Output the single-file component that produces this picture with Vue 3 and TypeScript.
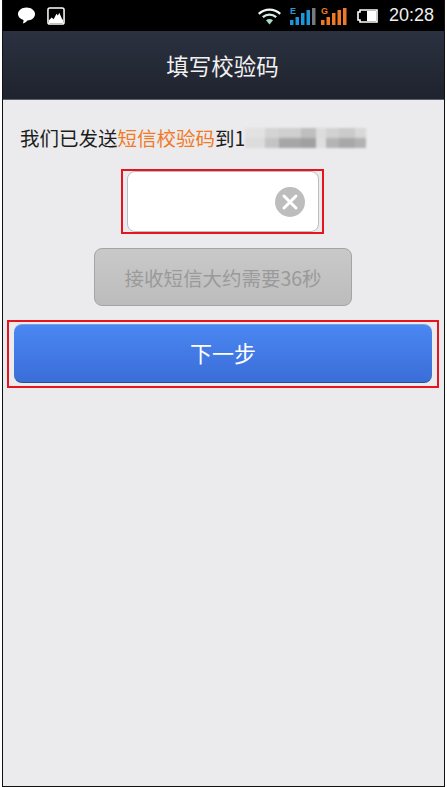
<script setup lang="ts">
const title = '填写校验码'
const seconds = 36

// greys of the mosaic that hides the phone number, top band then bottom band
const blurCells = [
  { w: 20, top: '#e2e2e3', bottom: '#dcdcdd' },
  { w: 14, top: '#d4d4d5', bottom: '#c4c4c5' },
  { w: 22, top: '#cfcfd0', bottom: '#a6a6a7' },
  { w: 15, top: '#bfbfc0', bottom: '#a0a0a1' },
  { w: 10, top: '#dcdcdd', bottom: '#dedede' },
  { w: 13, top: '#d2d2d3', bottom: '#b4b4b5' },
  { w: 16, top: '#cbcbcc', bottom: '#a8a8a9' },
  { w: 11, top: '#d8d8d9', bottom: '#b2b2b3' },
]
</script>

<template>
  <div class="frame">
    <div class="status-bar">
      <div class="status-left">
        <svg width="19" height="19" viewBox="0 0 20 20">
          <path d="M10 1.500C15 1.500 19 4.500 19 8.500C19 12.500 15 15.300 11 15.300C9.800 17 8 18 6 18.300C6.800 17 7 15.800 6.800 14.800C3.500 13.800 1 11.500 1 8.500C1 4.500 5 1.500 10 1.500Z" fill="#fff" />
        </svg>
        <svg width="18" height="18" viewBox="0 0 19 19">
          <rect x="1" y="1" width="17" height="17" rx="2" fill="#000" stroke="#fff" stroke-width="1.600" />
          <path d="M2 17V14L5 11L7 13L10 7L11.500 9L13 6L15.500 12L17 14V17Z" fill="#fff" />
        </svg>
      </div>
      <div class="status-right">
        <svg class="wifi" width="23" height="18" viewBox="0 0 23 18" fill="none">
          <path d="M0.800 6.800C6.800 1.200 16.200 1.200 22.200 6.800" stroke="#f2f8f5" stroke-width="2.400" />
          <path d="M4.800 10.200C8.800 6.700 14.200 6.700 18.200 10.200" stroke="#d5eee2" stroke-width="2.400" />
          <path d="M8 13.200C10.200 11.700 12.800 11.700 15 13.200L11.500 17.500Z" fill="#a8dcc4" />
        </svg>
        <svg class="signal" width="26" height="20" viewBox="0 0 26 20">
          <text x="0" y="8" class="net-letter" fill="#2a9ad6">E</text>
          <rect x="0" y="14" width="3.500" height="5" fill="#1d97dc" />
          <rect x="5.500" y="11" width="3.500" height="8" fill="#1d97dc" />
          <rect x="11" y="7" width="3.500" height="12" fill="#1d97dc" />
          <rect x="16.500" y="4" width="3.500" height="15" fill="#1d97dc" />
          <rect x="22" y="2" width="3.500" height="17" fill="#77797c" />
        </svg>
        <svg class="signal second" width="26" height="20" viewBox="0 0 26 20">
          <text x="0" y="8" class="net-letter" fill="#ee7a25">G</text>
          <rect x="0" y="14" width="3.500" height="5" fill="#ee7a25" />
          <rect x="5.500" y="11" width="3.500" height="8" fill="#ee7a25" />
          <rect x="11" y="7" width="3.500" height="12" fill="#ee7a25" />
          <rect x="16.500" y="4" width="3.500" height="15" fill="#ee7a25" />
          <rect x="22" y="2" width="3.500" height="17" fill="#ee7a25" />
        </svg>
        <svg class="battery" width="22" height="14" viewBox="0 0 22 14">
          <path d="M4 3H2V11H4V13H21V1H4Z" fill="#000" stroke="#fff" stroke-width="1.600" />
          <rect x="11" y="2" width="9" height="10" fill="#fff" />
        </svg>
        <span class="clock">20:28</span>
      </div>
    </div>

    <header class="nav">{{ title }}</header>

    <main class="content">
      <p class="notice">
        <span>我们已发送</span><span class="accent">短信校验码</span><span>到1</span>
        <span class="mosaic" aria-hidden="true">
          <i v-for="(cell, i) in blurCells" :key="i" :style="{ width: cell.w + 'px', background: `linear-gradient(${cell.top} 45%, ${cell.bottom} 55%)` }"></i>
        </span>
      </p>

      <div class="mark mark-input">
        <div class="code-input">
          <span class="clear">
            <svg width="30" height="30" viewBox="0 0 30 30">
              <circle cx="15" cy="15" r="15" fill="#bdbdbd" />
              <path d="M9 9L21 21M21 9L9 21" stroke="#fff" stroke-width="3" stroke-linecap="round" />
            </svg>
          </span>
        </div>
      </div>

      <button class="resend" type="button" disabled>接收短信大约需要{{ seconds }}秒</button>

      <div class="mark mark-next">
        <button class="next" type="button">下一步</button>
      </div>
    </main>
  </div>
</template>

<style scoped>
.frame {
  box-sizing: border-box;
  width: 443px;
  height: 787px;
  margin-left: 2px;
  border-left: 1px solid #111;
  border-right: 1px solid #111;
  border-bottom: 1px solid #111;
  display: flex;
  flex-direction: column;
  background: #ebebed;
  font-family: "Noto Sans CJK SC", "Liberation Sans", sans-serif;
}

.status-bar {
  height: 31px;
  flex: none;
  background: #000;
  display: flex;
  justify-content: space-between;
  align-items: center;
  padding: 0 10px 0 14px;
}

.status-left {
  display: flex;
  align-items: center;
  gap: 11px;
}

.status-right {
  display: flex;
  align-items: center;
}

.net-letter {
  font: 700 9px "Liberation Sans", sans-serif;
}

.signal {
  margin-left: 9px;
}

.signal.second {
  margin-left: 5px;
}

.battery {
  margin-left: 9px;
}

.clock {
  margin-left: 11px;
  color: #eee;
  font: 18px "Liberation Sans", sans-serif;
}

.nav {
  height: 69px;
  flex: none;
  box-sizing: border-box;
  padding-right: 2px;
  background: linear-gradient(#2b3140, #1f232e);
  border-bottom: 1px solid #5c6068;
  color: #f1f1f1;
  font-size: 22.500px;
  display: flex;
  align-items: center;
  justify-content: center;
}

.content {
  flex: 1;
  display: flex;
  flex-direction: column;
  align-items: center;
  padding-right: 1px;
}

.notice {
  align-self: flex-start;
  margin: 27px 0 0 17px;
  height: 22px;
  display: flex;
  align-items: center;
  color: #1c1c1c;
  font-size: 19.500px;
  line-height: 22px;
  white-space: nowrap;
}

.accent {
  color: #f07a26;
}

.mosaic {
  display: flex;
  height: 20px;
  filter: blur(1px);
}

.mosaic i {
  display: block;
  height: 100%;
}

.mark {
  box-sizing: border-box;
  border: 2px solid #e6141f;
}

.mark-input {
  width: 203px;
  height: 65px;
  margin-top: 20px;
  margin-right: 2px;
  padding: 0 3px 0 4px;
}

.code-input {
  box-sizing: border-box;
  height: 100%;
  background: #fff;
  border: 1px solid #b9c0c4;
  border-radius: 8px;
  display: flex;
  align-items: center;
  justify-content: flex-end;
  padding-right: 13px;
}

.clear {
  display: flex;
}

.resend {
  width: 258px;
  height: 58px;
  margin-top: 14px;
  border: 1px solid #a4a4a4;
  border-radius: 8px;
  background: linear-gradient(#c9c9c9, #bcbcbc);
  color: #9a9a9a;
  font: inherit;
  font-size: 19.500px;
  padding: 0;
}

.mark-next {
  width: 432px;
  height: 68px;
  margin-top: 14px;
  padding: 2px 5px;
}

.next {
  display: block;
  width: 100%;
  height: 59px;
  border: 0;
  border-top: 1px solid #7f9fd8;
  border-bottom: 1px solid #2b4f94;
  border-radius: 8px;
  background: linear-gradient(#4a87f2, #3b6dd8);
  color: #fff;
  font: inherit;
  font-size: 22px;
  padding: 0 0 3px;
}
</style>

<style>
html, body {
  margin: 0;
  background: #fff;
}
</style>
